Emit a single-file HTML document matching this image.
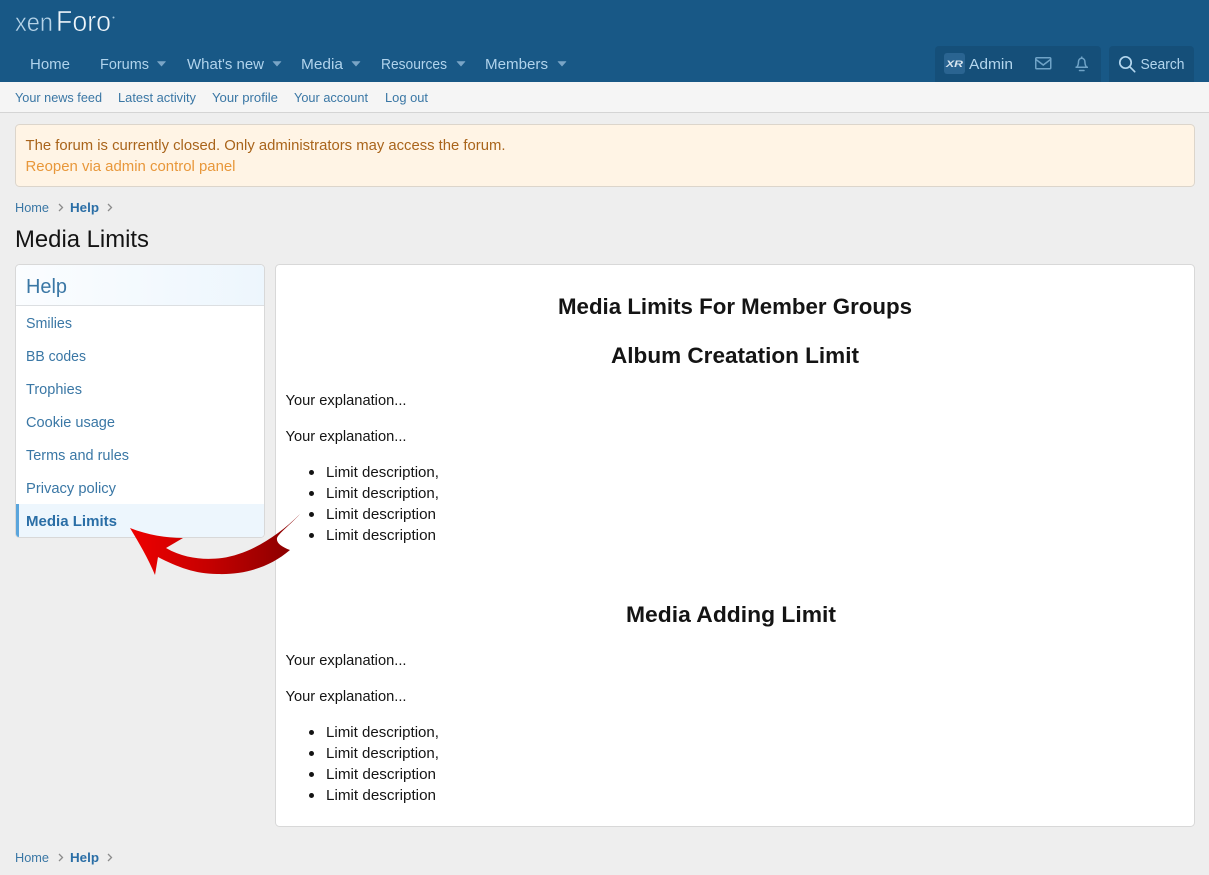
<!DOCTYPE html>
<html><head><meta charset="utf-8"><style>
html,body{margin:0;padding:0;background:#eee;width:1209px;height:875px;overflow:hidden}
svg{display:block;font-family:"Liberation Sans",sans-serif}
</style></head><body>
<svg width="1209" height="875" viewBox="0 0 1209 875" xmlns="http://www.w3.org/2000/svg">
<defs>
<linearGradient id="ar" x1="0" x2="1" y1="0" y2="0"><stop offset="0" stop-color="#ee0000"/><stop offset="0.45" stop-color="#c70000"/><stop offset="1" stop-color="#850000"/></linearGradient>
<linearGradient id="hd" x1="0" x2="1" y1="0" y2="0"><stop offset="0" stop-color="#fbfdff"/><stop offset="1" stop-color="#edf6fd"/></linearGradient>
</defs>
<rect width="1209" height="875" fill="#eeeeee"/>
<rect width="1209" height="82" fill="#185886"/>
<rect y="82" width="1209" height="30" fill="#f5f5f5"/>
<rect y="112" width="1209" height="1" fill="#d4d4d4"/>

<!-- logo -->
<text x="15" y="31" font-size="26" textLength="38" lengthAdjust="spacingAndGlyphs" fill="#b5d3e8" stroke="#185886" stroke-width="0.5">xen</text>
<text x="56" y="31" font-size="29" textLength="55" lengthAdjust="spacingAndGlyphs" fill="#eef5fa" stroke="#185886" stroke-width="0.6">Foro</text>
<circle cx="113.500" cy="17.500" r="1" fill="#9cc3de"/>

<!-- nav -->
<g font-size="15" fill="#b0d3ec">
<text x="30" y="69" textLength="40" lengthAdjust="spacingAndGlyphs">Home</text>
<text x="100" y="69" textLength="49" lengthAdjust="spacingAndGlyphs">Forums</text>
<text x="187" y="69" textLength="77" lengthAdjust="spacingAndGlyphs">What's new</text>
<text x="301" y="69" textLength="42" lengthAdjust="spacingAndGlyphs">Media</text>
<text x="381" y="69" textLength="66" lengthAdjust="spacingAndGlyphs">Resources</text>
<text x="485" y="69" textLength="63" lengthAdjust="spacingAndGlyphs">Members</text>
</g>
<g fill="#7aa5c6" stroke="#7aa5c6" stroke-width="0.6" stroke-linejoin="round">
<path d="M157.500 61.500h8l-4 4.500z"/><path d="M273 61.500h8l-4 4.500z"/><path d="M352 61.500h8l-4 4.500z"/><path d="M457 61.500h8l-4 4.500z"/><path d="M558 61.500h8l-4 4.500z"/>
</g>

<!-- right nav -->
<path d="M935 82V50a4 4 0 0 1 4-4h158a4 4 0 0 1 4 4v32z" fill="#154f79"/>
<path d="M1109 82V50a4 4 0 0 1 4-4h77a4 4 0 0 1 4 4v32z" fill="#154f79"/>
<rect x="944" y="53" width="21" height="21" rx="3" fill="#2a6491"/>
<text x="946" y="67" font-size="9" font-weight="bold" font-style="italic" fill="#d9e6f0" textLength="17" lengthAdjust="spacingAndGlyphs">XR</text>
<text x="969" y="69" font-size="15" fill="#b3d6ee" textLength="44" lengthAdjust="spacingAndGlyphs">Admin</text>
<g fill="none" stroke="#6fa3c7" stroke-width="1.500">
<rect x="1035.750" y="57.750" width="15" height="11" rx="1"/>
<path d="M1036 59.500l7.250 5.500 7.250-5.500"/>
<path d="M1075.500 67.250h12.500M1077 67c1.300-1.800 1.500-3.500 1.500-5.500a3.200 3.200 0 0 1 6.400 0c0 2 .2 3.700 1.500 5.500"/>
<path d="M1081.700 56.500v1.500"/>
<path d="M1079.500 70.500h4.500" stroke-linecap="round"/>
</g>
<g fill="none" stroke="#b3d6ee" stroke-width="1.700">
<circle cx="1125.500" cy="62.500" r="5.700"/><path d="M1129.700 66.700l5 5" stroke-linecap="round"/>
</g>
<text x="1140.500" y="69" font-size="15" fill="#b3d6ee" textLength="44" lengthAdjust="spacingAndGlyphs">Search</text>

<!-- subnav -->
<g font-size="13" fill="#3a77a5">
<text x="15" y="102" textLength="87" lengthAdjust="spacingAndGlyphs">Your news feed</text>
<text x="118" y="102" textLength="78" lengthAdjust="spacingAndGlyphs">Latest activity</text>
<text x="212" y="102" textLength="66" lengthAdjust="spacingAndGlyphs">Your profile</text>
<text x="294" y="102" textLength="74" lengthAdjust="spacingAndGlyphs">Your account</text>
<text x="385" y="102" textLength="43" lengthAdjust="spacingAndGlyphs">Log out</text>
</g>

<!-- notice -->
<rect x="15.500" y="124.500" width="1179" height="62" rx="4" fill="#fff4e5" stroke="#dcd5cb"/>
<text x="25.500" y="150" font-size="14.500" fill="#a9641b" textLength="480" lengthAdjust="spacingAndGlyphs">The forum is currently closed. Only administrators may access the forum.</text>
<text x="25.500" y="171" font-size="14.500" fill="#e8973a" textLength="210" lengthAdjust="spacingAndGlyphs">Reopen via admin control panel</text>

<!-- breadcrumb top -->
<text x="15" y="212" font-size="13" fill="#3a77a5" textLength="34" lengthAdjust="spacingAndGlyphs">Home</text>
<path d="M59 204l3.500 3.500-3.500 3.500" fill="none" stroke="#8c8c8c" stroke-width="1.300"/>
<text x="70" y="212" font-size="13" font-weight="bold" fill="#2a6ea6" textLength="29" lengthAdjust="spacingAndGlyphs">Help</text>
<path d="M108 204l3.500 3.500-3.500 3.500" fill="none" stroke="#8c8c8c" stroke-width="1.300"/>

<text x="15" y="247" font-size="24" fill="#141414" textLength="134" lengthAdjust="spacingAndGlyphs">Media Limits</text>

<!-- sidebar -->
<rect x="15.500" y="264.500" width="249" height="273" rx="4" fill="#fff" stroke="#d8d8d8"/>
<path d="M16 305V269a4 4 0 0 1 4-4h240a4 4 0 0 1 4 4v36z" fill="url(#hd)"/>
<rect x="16" y="305" width="248" height="1" fill="#dcdfe2"/>
<text x="26" y="293" font-size="20" fill="#3a77a5" textLength="41" lengthAdjust="spacingAndGlyphs">Help</text>
<g font-size="14.500" fill="#3a77a5">
<text x="26" y="328" textLength="46" lengthAdjust="spacingAndGlyphs">Smilies</text>
<text x="26" y="361" textLength="60" lengthAdjust="spacingAndGlyphs">BB codes</text>
<text x="26" y="394" textLength="56" lengthAdjust="spacingAndGlyphs">Trophies</text>
<text x="26" y="427" textLength="89" lengthAdjust="spacingAndGlyphs">Cookie usage</text>
<text x="26" y="460" textLength="103" lengthAdjust="spacingAndGlyphs">Terms and rules</text>
<text x="26" y="493" textLength="90" lengthAdjust="spacingAndGlyphs">Privacy policy</text>
</g>
<path d="M16 504h248v30a3 3 0 0 1-3 3H19a3 3 0 0 1-3-3z" fill="#edf6fd"/>
<path d="M16 504h3v33a3 3 0 0 1-3-3z" fill="#5aa5dc"/>
<text x="26" y="526" font-size="14.500" font-weight="bold" fill="#2a6ea6" textLength="91" lengthAdjust="spacingAndGlyphs">Media Limits</text>

<!-- main -->
<rect x="275.500" y="264.500" width="919" height="562" rx="4" fill="#fff" stroke="#d8d8d8"/>
<g font-size="22" font-weight="bold" fill="#141414">
<text x="558" y="314" textLength="354" lengthAdjust="spacingAndGlyphs">Media Limits For Member Groups</text>
<text x="611" y="363" textLength="248" lengthAdjust="spacingAndGlyphs">Album Creatation Limit</text>
<text x="626" y="622" textLength="210" lengthAdjust="spacingAndGlyphs">Media Adding Limit</text>
</g>
<g font-size="14.500" fill="#141414">
<text x="285.500" y="405" textLength="121" lengthAdjust="spacingAndGlyphs">Your explanation...</text>
<text x="285.500" y="441" textLength="121" lengthAdjust="spacingAndGlyphs">Your explanation...</text>
<text x="326" y="477" textLength="113" lengthAdjust="spacingAndGlyphs">Limit description,</text>
<text x="326" y="498" textLength="113" lengthAdjust="spacingAndGlyphs">Limit description,</text>
<text x="326" y="519" textLength="110" lengthAdjust="spacingAndGlyphs">Limit description</text>
<text x="326" y="540" textLength="110" lengthAdjust="spacingAndGlyphs">Limit description</text>
<text x="285.500" y="665" textLength="121" lengthAdjust="spacingAndGlyphs">Your explanation...</text>
<text x="285.500" y="701" textLength="121" lengthAdjust="spacingAndGlyphs">Your explanation...</text>
<text x="326" y="737" textLength="113" lengthAdjust="spacingAndGlyphs">Limit description,</text>
<text x="326" y="758" textLength="113" lengthAdjust="spacingAndGlyphs">Limit description,</text>
<text x="326" y="779" textLength="110" lengthAdjust="spacingAndGlyphs">Limit description</text>
<text x="326" y="800" textLength="110" lengthAdjust="spacingAndGlyphs">Limit description</text>
</g>
<g fill="#141414">
<circle cx="311.500" cy="472.500" r="2.500"/><circle cx="311.500" cy="493.500" r="2.500"/><circle cx="311.500" cy="514.500" r="2.500"/><circle cx="311.500" cy="535.500" r="2.500"/>
<circle cx="311.500" cy="732.500" r="2.500"/><circle cx="311.500" cy="753.500" r="2.500"/><circle cx="311.500" cy="774.500" r="2.500"/><circle cx="311.500" cy="795.500" r="2.500"/>
</g>

<!-- arrow -->
<path d="M130 528C148 535 166 538 183 538L166 548C185 559 205 560 222 558C250 554 278 536 300 514C289 526 279 533 277 538C276 543 282 547 290 550C270 567 245 575 217 574C196 574 177 567 158 557L155 575C148 558 139 543 130 528Z" fill="url(#ar)"/>

<!-- breadcrumb bottom -->
<text x="15" y="862" font-size="13" fill="#3a77a5" textLength="34" lengthAdjust="spacingAndGlyphs">Home</text>
<path d="M59 854l3.500 3.500-3.500 3.500" fill="none" stroke="#8c8c8c" stroke-width="1.300"/>
<text x="70" y="862" font-size="13" font-weight="bold" fill="#2a6ea6" textLength="29" lengthAdjust="spacingAndGlyphs">Help</text>
<path d="M108 854l3.500 3.500-3.500 3.500" fill="none" stroke="#8c8c8c" stroke-width="1.300"/>
</svg>
</body></html>
